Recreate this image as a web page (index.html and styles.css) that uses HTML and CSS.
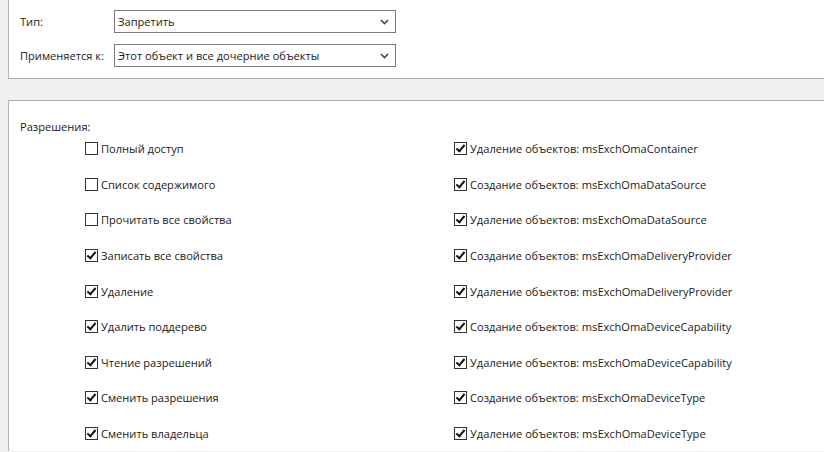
FILE: index.html
```html
<!DOCTYPE html>
<html lang="ru">
<head>
<meta charset="utf-8">
<link rel="stylesheet" href="styles.css">
</head>
<body>
<div class="panel top">
  <div class="field">
    <span class="label">Тип:</span>
    <div class="select"><span>Запретить</span><svg class="arrow" width="9" height="6" viewBox="0 0 9 6"><path d="M1 1 L4.5 4.5 L8 1" fill="none" stroke="#444" stroke-width="1.6"/></svg></div>
  </div>
  <div class="field">
    <span class="label">Применяется к:</span>
    <div class="select"><span>Этот объект и все дочерние объекты</span><svg class="arrow" width="9" height="6" viewBox="0 0 9 6"><path d="M1 1 L4.5 4.5 L8 1" fill="none" stroke="#444" stroke-width="1.6"/></svg></div>
  </div>
</div>
<div class="panel perms">
  <div class="title">Разрешения:</div>
  <div class="grid">
    <label class="cb"><span class="box"></span>Полный доступ</label>
    <label class="cb"><span class="box on"></span>Удаление объектов: msExchOmaContainer</label>
    <label class="cb"><span class="box"></span>Список содержимого</label>
    <label class="cb"><span class="box on"></span>Создание объектов: msExchOmaDataSource</label>
    <label class="cb"><span class="box"></span>Прочитать все свойства</label>
    <label class="cb"><span class="box on"></span>Удаление объектов: msExchOmaDataSource</label>
    <label class="cb"><span class="box on"></span>Записать все свойства</label>
    <label class="cb"><span class="box on"></span>Создание объектов: msExchOmaDeliveryProvider</label>
    <label class="cb"><span class="box on"></span>Удаление</label>
    <label class="cb"><span class="box on"></span>Удаление объектов: msExchOmaDeliveryProvider</label>
    <label class="cb"><span class="box on"></span>Удалить поддерево</label>
    <label class="cb"><span class="box on"></span>Создание объектов: msExchOmaDeviceCapability</label>
    <label class="cb"><span class="box on"></span>Чтение разрешений</label>
    <label class="cb"><span class="box on"></span>Удаление объектов: msExchOmaDeviceCapability</label>
    <label class="cb"><span class="box on"></span>Сменить разрешения</label>
    <label class="cb"><span class="box on"></span>Создание объектов: msExchOmaDeviceType</label>
    <label class="cb"><span class="box on"></span>Сменить владельца</label>
    <label class="cb"><span class="box on"></span>Удаление объектов: msExchOmaDeviceType</label>
  </div>
</div>
</body>
</html>
```
FILE: styles.css
```css
html, body {
  margin: 0;
  padding: 0;
  background: #f0f0f0;
  font-family: "Open Sans", "Noto Sans", sans-serif;
  font-size: 11.1px;
  color: #1a1a1a;
  overflow: hidden;
  height: 452px;
}
.panel {
  margin-left: 8px;
  background: #fff;
  border-left: 1px solid #b4b4b4;
}
.top {
  border-bottom: 1px solid #adadad;
  padding-top: 10px;
  box-sizing: border-box;
  height: 79px;
}
.field {
  display: flex;
  align-items: center;
  height: 23px;
  margin-bottom: 11px;
}
.label {
  width: 94px;
  padding-left: 11px;
}
.select {
  height: 21px;
  border: 1px solid #7a7a7a;
  display: flex;
  align-items: center;
  justify-content: space-between;
  padding: 0 6px 0 3px;
  width: 271px;
}
.arrow { display: block; }
.perms {
  margin-top: 21px;
  border-top: 1px solid #adadad;
  height: 351px;
  padding-top: 17px;
  box-sizing: border-box;
  overflow: hidden;
}
.title {
  padding-left: 11px;
  height: 17px;
  line-height: 17px;
}
.grid {
  display: grid;
  grid-template-columns: 369px 1fr;
  grid-auto-rows: 35.6px;
  padding-left: 76px;
  margin-top: -4px;
}
.cb {
  display: flex;
  align-items: center;
  gap: 3px;
}
.box {
  width: 11px;
  height: 11px;
  border: 1px solid #333;
  background: #fff;
  position: relative;
  flex: none;
}
.box.on::after {
  content: "";
  position: absolute;
  left: 3px;
  top: 0px;
  width: 3px;
  height: 7px;
  border: solid #111;
  border-width: 0 2px 2px 0;
  transform: rotate(40deg);
}
```
